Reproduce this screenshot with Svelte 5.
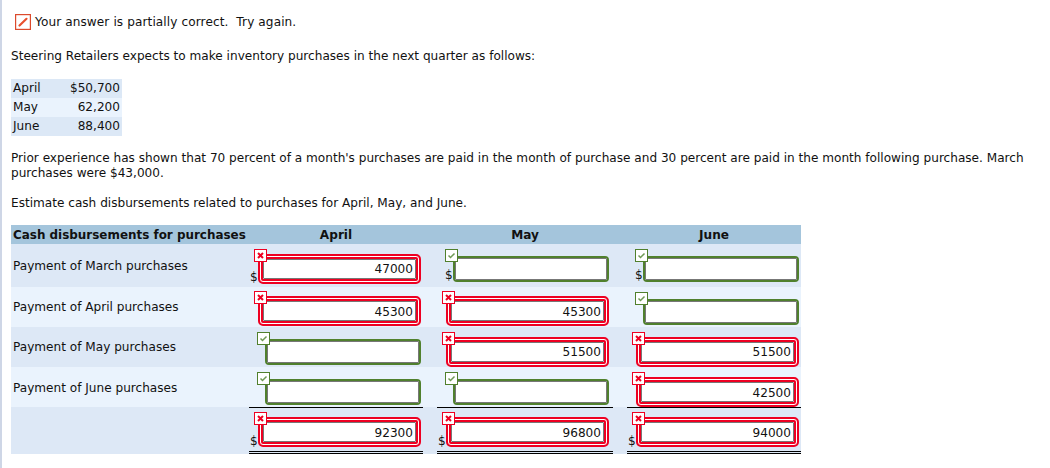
<script>
  const purchases = [
    ['April', '$50,700'],
    ['May', '62,200'],
    ['June', '88,400']
  ];

  // status: x = wrong, ok = right. blank values stay empty
  const rows = [
    {
      label: 'Payment of March purchases',
      dollar: true,
      cells: [
        { status: 'x', value: '47000' },
        { status: 'ok', value: '' },
        { status: 'ok', value: '' }
      ]
    },
    {
      label: 'Payment of April purchases',
      cells: [
        { status: 'x', value: '45300' },
        { status: 'x', value: '45300' },
        { status: 'ok', value: '' }
      ]
    },
    {
      label: 'Payment of May purchases',
      cells: [
        { status: 'ok', value: '' },
        { status: 'x', value: '51500' },
        { status: 'x', value: '51500' }
      ]
    },
    {
      label: 'Payment of June purchases',
      cells: [
        { status: 'ok', value: '' },
        { status: 'ok', value: '' },
        { status: 'x', value: '42500' }
      ]
    },
    {
      label: '',
      dollar: true,
      total: true,
      cells: [
        { status: 'x', value: '92300' },
        { status: 'x', value: '96800' },
        { status: 'x', value: '94000' }
      ]
    }
  ];
</script>

<main class="page">
  <div class="result">
    <svg width="16" height="16" viewBox="0 0 16 16">
      <rect x="0.6" y="0.6" width="14.8" height="14.8" fill="#fff" stroke="#dc4a2c" stroke-width="1.2" />
      <path d="M4.5 11.5 L11.5 4.8" stroke="#e8502e" stroke-width="2.2" stroke-linecap="round" />
    </svg>
    <span>Your answer is partially correct.&nbsp; Try again.</span>
  </div>

  <p class="intro">Steering Retailers expects to make inventory purchases in the next quarter as follows:</p>

  <div class="purchases">
    {#each purchases as [month, amount]}
      <div class="purchase">
        <span>{month}</span>
        <span>{amount}</span>
      </div>
    {/each}
  </div>

  <p class="prior">
    Prior experience has shown that 70 percent of a month's purchases are paid in the month of purchase and 30 percent are paid in the month following purchase. March purchases were $43,000.
  </p>

  <p class="estimate">Estimate cash disbursements related to purchases for April, May, and June.</p>

  <div class="sheet">
    <div class="head">
      <div class="title">Cash disbursements for purchases</div>
      <div class="month">April</div>
      <div class="month">May</div>
      <div class="month last">June</div>
    </div>

    {#each rows as row, i}
      <div
        class="row"
        class:alt={i % 2 === 1}
        class:total={row.total}
        class:first={i === 0}
        class:second={i === 1}
        class:fourth={i === 3}
      >
        <div class="label">{row.label}</div>
        {#each row.cells as cell, c}
          <div class="cell" class:last={c === 2}>
            <div class="amount" class:wrong={cell.status === 'x'} class:right={cell.status === 'ok'}>
              <span class="sign">{row.dollar ? '$' : ''}</span>
              <div class="box">
                <span class="mark">
                  {#if cell.status === 'x'}
                    <svg width="13" height="13" viewBox="0 0 13 13">
                      <rect x="0.5" y="0.5" width="12" height="12" fill="#fff" stroke="#ee0022" />
                      <path d="M4 4 L9 9 M9 4 L4 9" stroke="#ee0022" stroke-width="2" />
                    </svg>
                  {:else}
                    <svg width="13" height="13" viewBox="0 0 13 13">
                      <rect x="0.5" y="0.5" width="12" height="12" fill="#fff" stroke="#50802d" />
                      <path d="M3.5 6.5 L5.5 8.5 L9.5 4.5" fill="none" stroke="#6f9a55" stroke-width="1.5" />
                    </svg>
                  {/if}
                </span>
                <span class="input">{cell.value}</span>
              </div>
            </div>
          </div>
        {/each}
      </div>
    {/each}
  </div>
</main>

<style>
  :global(body) {
    background: #fff;
  }

  .page {
    height: 468px;
    box-sizing: border-box;
    border-left: 2px solid #ced6e6;
    padding: 14px 20px 0 9px;
    font: 12.1px/15px "DejaVu Sans", Verdana, sans-serif;
    color: #111;
    overflow: hidden;
  }

  p {
    margin: 0;
  }

  .result {
    display: flex;
    align-items: center;
    gap: 4px;
    margin-left: 4px;
    height: 16px;
    letter-spacing: 0.1px;
  }

  .intro {
    margin-top: 19px;
  }

  .purchases {
    margin-top: 15px;
    width: 111px;
  }

  .purchase {
    display: flex;
    justify-content: space-between;
    height: 19px;
    line-height: 19px;
    padding: 0 2px;
    background: #dce8f6;
  }

  .purchase:nth-child(2) {
    background: #eaf3fd;
  }

  .prior {
    margin-top: 15px;
  }

  .estimate {
    margin-top: 15px;
  }

  .sheet {
    margin-top: 14px;
    width: 790px;
  }

  .head,
  .row {
    display: grid;
    grid-template-columns: 238px 188px 190px 174px;
  }

  .head {
    height: 19px;
    line-height: 20px;
    background: #a4c5dc;
    font-weight: bold;
  }

  .title {
    padding-left: 2px;
    font-size: 11.95px;
    white-space: nowrap;
  }

  .month {
    text-align: center;
    padding-right: 14px;
  }

  .month.last {
    padding-right: 0;
  }

  .row {
    height: 40px;
    background: #dde8f6;
  }

  .row.first {
    height: 43px;
  }

  .row.alt {
    background: #eaf3fd;
  }

  .row.total {
    height: 47px;
  }

  .label {
    padding: 13px 0 0 2px;
  }

  .first .label {
    padding-top: 15px;
  }

  .fourth .label {
    padding-top: 14px;
  }

  .cell {
    padding-right: 14px;
  }

  .cell.last {
    padding-right: 0;
  }

  .amount {
    display: flex;
    align-items: flex-start;
  }

  .sign {
    align-self: flex-end;
    width: 8px;
    flex: none;
    line-height: 13px;
  }

  .box {
    position: relative;
    box-sizing: border-box;
    background: #fff;
  }

  .mark {
    position: absolute;
    display: block;
    height: 13px;
    width: 13px;
  }

  .input {
    display: block;
    box-sizing: border-box;
    height: 100%;
    line-height: 19px;
    text-align: right;
    padding-right: 2px;
    background: #fff;
    border: 1px solid #777;
    border-radius: 1px;
  }

  .fourth .input,
  .total .input,
  .second .input {
    line-height: 21px;
  }

  .wrong {
    padding-left: 1px;
    height: 30px;
    margin-top: 10px;
  }

  .second .wrong {
    margin-top: 9px;
  }

  .wrong .box {
    width: 163px;
    height: 30px;
    padding: 3px;
    border: 2px solid #ee0022;
    border-radius: 5px;
    box-shadow: inset 0 0 0 1px #fff, inset 0 0 0 3px #ee0022;
  }

  .wrong .mark {
    left: -6px;
    top: -7px;
  }

  .right {
    padding-left: 8px;
    height: 26px;
    margin-top: 12px;
  }

  .right .box {
    width: 156px;
    height: 26px;
    border: 2px solid #50802d;
    border-radius: 4px;
  }

  .right .mark {
    left: -10px;
    top: -9px;
  }

  /* totals: the rules sit on the cell, the field inside them */
  .total .cell {
    height: 47px;
  }

  .total .amount {
    box-sizing: border-box;
    height: 47px;
    margin-top: 0;
    padding-top: 9px;
    border-top: 1px solid #000;
    border-bottom: 3px double #000;
  }

  .total .sign {
    margin-bottom: 3px;
  }
</style>
